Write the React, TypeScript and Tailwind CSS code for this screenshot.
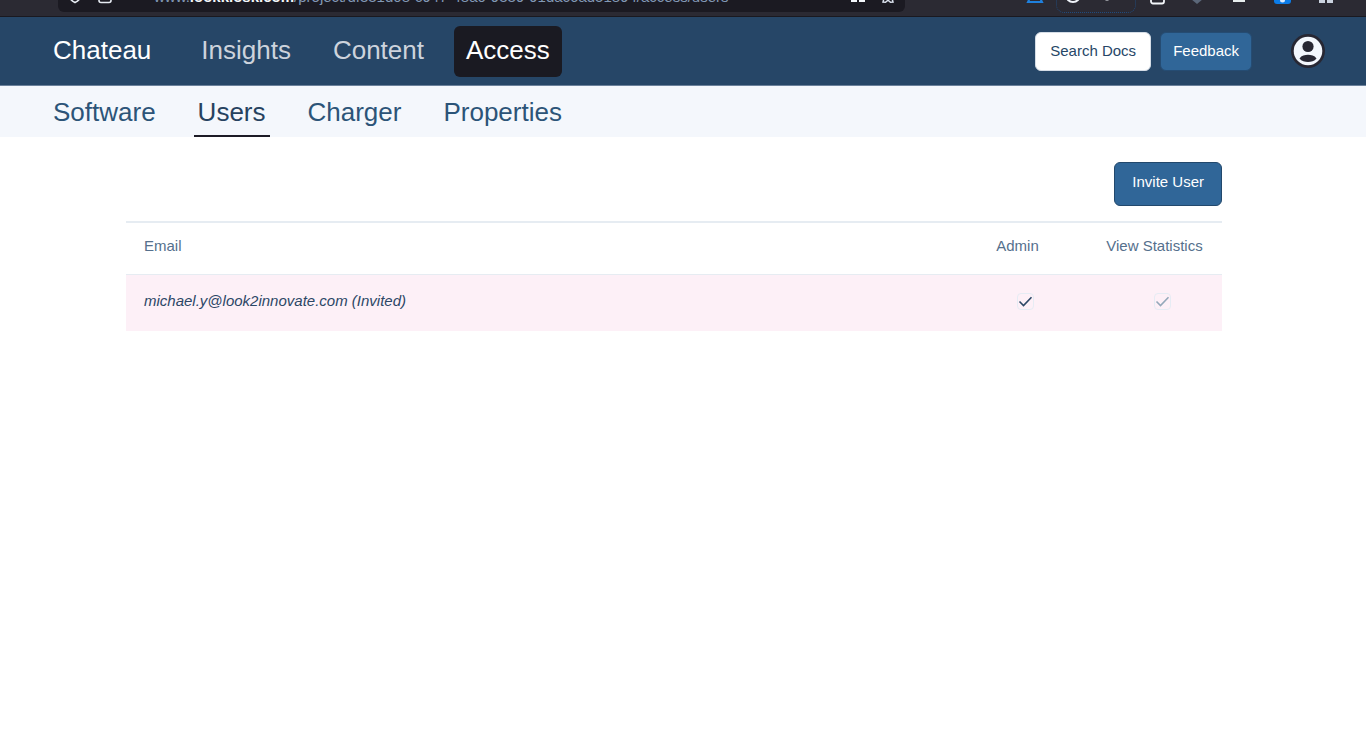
import type { ReactNode } from "react";

const sections = [
  { label: "Insights", active: false },
  { label: "Content", active: false },
  { label: "Access", active: true },
];

const pages = [
  { label: "Software", active: false },
  { label: "Users", active: true },
  { label: "Charger", active: false },
  { label: "Properties", active: false },
];

const users = [
  { email: "michael.y@look2innovate.com", invited: true, admin: true, viewStatistics: true },
];

function ToolbarIcon({ children }: { children: ReactNode }) {
  return (
    <svg aria-hidden="true" viewBox="0 0 18 18" className="size-[18px] shrink-0" fill="none">
      {children}
    </svg>
  );
}

function BrowserBar() {
  return (
    <div className="flex h-[17px] items-start overflow-hidden border-b border-[#1a1920] bg-[#2b2a33] pl-[58px]">
      <div className="flex h-3 min-w-0 flex-1 items-end overflow-hidden rounded-b-md bg-[#1b1a22] pl-2">
        <div className="mb-2 flex shrink-0 gap-3">
          <ToolbarIcon>
            <path d="M9 2 15 4v5c0 4-3 6-6 7.500C6 15 3 13 3 9V4z" stroke="#e6ebf2" strokeWidth="1.600" />
          </ToolbarIcon>
          <ToolbarIcon>
            <rect x="3" y="7" width="12" height="9.500" rx="2" stroke="#e6ebf2" strokeWidth="1.600" />
            <path d="M5.500 7V4a3.500 3.500 0 0 1 7 0v3" stroke="#e6ebf2" strokeWidth="1.600" />
          </ToolbarIcon>
        </div>
        <p className="mb-[5px] ml-10 min-w-0 flex-1 overflow-hidden text-[15px] leading-5 whitespace-nowrap text-[#8298b5]">
          www.<span className="font-bold text-[#f4f7fb]">lookkiosk.com</span>
          /project/df331d08-c947-48a0-9339-91dac6ad51894/access/users
        </p>
        <div className="mr-2 mb-2 flex shrink-0 gap-3">
          <ToolbarIcon>
            <path d="M2 2h6v6H2zM10 2h6v6h-6zM2 10h6v6H2zM10 10h6v6h-6z" fill="#f4f7fb" />
          </ToolbarIcon>
          <ToolbarIcon>
            <path d="m9 2 2 4.500 5 .5-3.500 3.500 1.500 5.500-2.500.3L9 14.200l-2.500 2.100-2.500-.3 1.500-5.500L2 7l5-.5z" stroke="#d9e0ec" strokeWidth="1.500" />
          </ToolbarIcon>
        </div>
      </div>
      <div className="flex h-[13px] w-[461px] shrink-0 items-end justify-end overflow-hidden pr-8">
        <div className="mr-3 mb-[9px]">
          <ToolbarIcon>
            <path d="M4 3h10v9l2 4H2l2-4z" stroke="#1f80dd" strokeWidth="2" />
          </ToolbarIcon>
        </div>
        <div className="mr-3 flex h-8 w-20 items-end gap-4 rounded-lg border border-dotted border-[#214b7c] pb-2 pl-2">
          <ToolbarIcon>
            <circle cx="8" cy="9" r="7" stroke="#f0f4fa" strokeWidth="2" />
            <circle cx="8" cy="9" r="5" fill="#6b87a8" />
          </ToolbarIcon>
          <ToolbarIcon>
            <path d="M5 3h6v4l-3 2v5.500" stroke="#f0f4fa" strokeWidth="3" />
          </ToolbarIcon>
        </div>
        <div className="mb-2 flex gap-6">
          <ToolbarIcon>
            <rect x="3" y="2" width="13" height="14.500" rx="2" stroke="#f4f7fb" strokeWidth="1.800" />
          </ToolbarIcon>
          <ToolbarIcon>
            <path d="M1 3h12v9l-6 5-6-5z" fill="#5b6779" />
          </ToolbarIcon>
          <ToolbarIcon>
            <rect x="1" y="3" width="12" height="12" fill="#e8eeee" />
          </ToolbarIcon>
          <ToolbarIcon>
            <rect x="0" y="0" width="17" height="17" rx="3" fill="#0b7ce8" />
            <circle cx="8.500" cy="13" r="2.500" fill="#dcecff" />
          </ToolbarIcon>
          <ToolbarIcon>
            <path d="M3 2h6v6H3zM11 2h6v6h-6zM3 10h6v6H3zM11 10h6v6h-6z" fill="#cbd3df" />
          </ToolbarIcon>
        </div>
      </div>
    </div>
  );
}

function Header() {
  return (
    <header className="flex h-[69px] items-start border-b border-[#6b819b] bg-[#264667] pr-10 pl-[53px]">
      <a href="#home" className="mt-[9px] mr-[38px] text-[26px] leading-[48px] text-white">
        Chateau
      </a>
      <nav aria-label="Main" className="mt-[9px] flex gap-[18px]">
        {sections.map((s) => (
          <a
            key={s.label}
            href={"#" + s.label.toLowerCase()}
            aria-current={s.active ? "page" : undefined}
            className={
              s.active
                ? "rounded-md bg-[#1a1a22] px-3 pb-[3px] text-[26px] leading-[48px] text-white"
                : "px-3 pb-[3px] text-[26px] leading-[48px] text-[#cdd3dc]"
            }
          >
            {s.label}
          </a>
        ))}
      </nav>
      <div className="mt-[15px] ml-auto flex items-start">
        <button type="button" className="h-[39px] rounded-md border border-[#d5dde6] bg-white px-[14px] pb-px text-[15px] text-[#264667]">
          Search Docs
        </button>
        <button type="button" className="ml-[9px] h-[39px] rounded-md border border-[#254c73] bg-[#306698] px-3 pb-px text-[15px] text-white">
          Feedback
        </button>
        <button type="button" aria-label="Account" className="mt-px ml-[38px]">
          <svg aria-hidden="true" viewBox="0 0 36 36" className="size-9">
            <circle cx="18" cy="18" r="17" fill="#272733" />
            <circle cx="18" cy="18" r="14.300" fill="#f3f7fd" />
            <circle cx="18" cy="13.500" r="5.600" fill="#272733" />
            <path d="M9.500 25.500C11.500 22.500 15 21.800 18 21.800s6.500.7 8.500 3.700C24.500 28.300 21 29 18 29s-6.500-.7-8.500-3.500z" fill="#272733" />
          </svg>
        </button>
      </div>
    </header>
  );
}

function Check({ checked, label, disabled }: { checked: boolean; label: string; disabled?: boolean }) {
  return (
    <span className="inline-grid align-middle">
      <input
        type="checkbox"
        aria-label={label}
        defaultChecked={checked}
        disabled={disabled}
        className="peer col-start-1 row-start-1 size-[17px] appearance-none rounded-sm border border-[#e6ecf4]"
      />
      <svg
        aria-hidden="true"
        viewBox="0 0 17 17"
        className={
          "pointer-events-none invisible col-start-1 row-start-1 size-[17px] peer-checked:visible " +
          (disabled ? "text-[#94a8ba]" : "text-[#2c4766]")
        }
      >
        <path d="M2.500 8.500 6.500 12.500 14.500 4.300" fill="none" stroke="currentColor" strokeWidth="1.600" />
      </svg>
    </span>
  );
}

export default function App() {
  return (
    <div className="min-h-screen bg-white font-['Liberation_Sans',Arial,sans-serif]">
      <BrowserBar />
      <Header />
      <nav aria-label="Access" className="flex h-[51px] gap-[34px] bg-[#f4f7fc] pl-[49px]">
        {pages.map((p) => (
          <a
            key={p.label}
            href={"#" + p.label.toLowerCase()}
            aria-current={p.active ? "page" : undefined}
            className={
              p.active
                ? "border-b-2 border-[#1c1b26] px-1 text-[26px] leading-[52px] text-[#264260]"
                : "px-1 text-[26px] leading-[52px] text-[#2c5478]"
            }
          >
            {p.label}
          </a>
        ))}
      </nav>
      <main className="mr-36 ml-[126px] pt-[25px]">
        <div className="flex justify-end">
          <button type="button" className="h-11 rounded-md border border-[#22486c] bg-[#306698] px-[17px] pb-1 text-[15px] text-white">
            Invite User
          </button>
        </div>
        <table className="mt-[15px] w-full table-fixed border-collapse text-[15px]">
          <thead>
            <tr className="h-[52px] border-t-2 border-b border-t-[#e6ecf2] border-b-[#e6ecf2] text-[#55708d]">
              <th scope="col" className="pb-1 pl-[18px] text-left font-normal">Email</th>
              <th scope="col" className="w-[137px] pb-1 pl-0.5 text-center font-normal">Admin</th>
              <th scope="col" className="w-[137px] pb-1 pl-0.5 text-center font-normal">View Statistics</th>
            </tr>
          </thead>
          <tbody>
            {users.map((u) => (
              <tr key={u.email} className="h-[57px] bg-[#fdf0f7] text-[#2c4766]">
                <td className="pb-1 pl-[18px] italic">
                  {u.email}
                  {u.invited ? " (Invited)" : ""}
                </td>
                <td className="pb-1 pl-[18px] text-center">
                  <Check checked={u.admin} label={"Admin: " + u.email} />
                </td>
                <td className="pb-1 pl-[18px] text-center">
                  <Check checked={u.viewStatistics} label={"View Statistics: " + u.email} disabled />
                </td>
              </tr>
            ))}
          </tbody>
        </table>
      </main>
    </div>
  );
}
